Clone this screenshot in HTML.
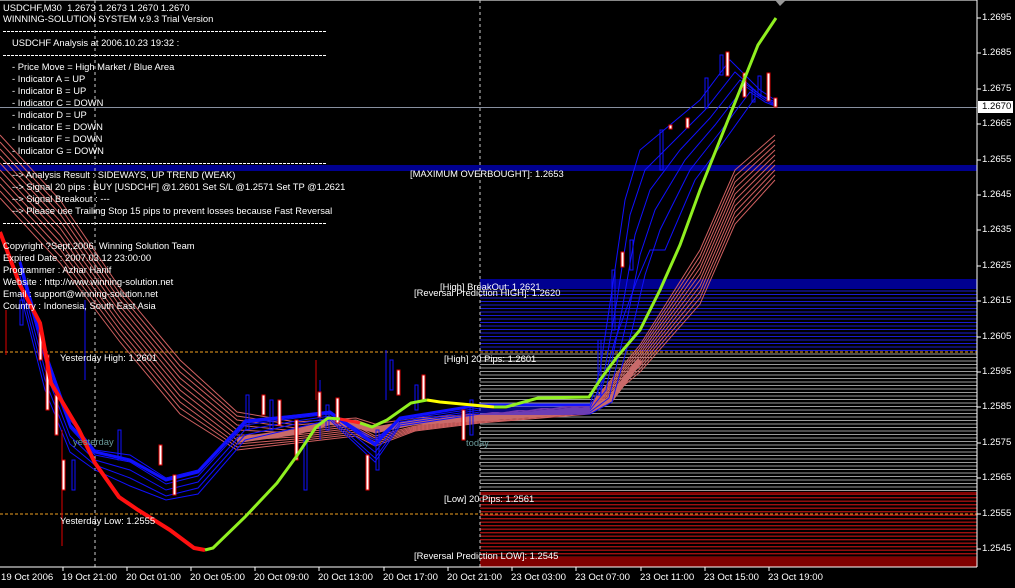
<!DOCTYPE html>
<html><head><meta charset="utf-8"><style>
html,body{margin:0;padding:0;background:#000;}
#w{position:relative;width:1015px;height:588px;overflow:hidden;background:#000;font-family:"Liberation Sans",sans-serif;font-size:9.4px;color:#fff;}
.t{position:absolute;white-space:nowrap;line-height:12px;}
.ax{position:absolute;left:982px;white-space:nowrap;font-size:9.6px;}
.tm{position:absolute;top:572px;white-space:nowrap;font-size:9.6px;}
.d{position:absolute;left:3px;width:324px;height:1px;background:repeating-linear-gradient(90deg,#fff 0 3px,transparent 3px 4px);}
</style></head><body><div id="w">
<svg width="1015" height="588" style="position:absolute;left:0;top:0">
<defs>
<pattern id="pb" width="4" height="3.5" patternUnits="userSpaceOnUse"><rect width="4" height="1" fill="#1a1ad0"/></pattern>
<pattern id="pg" width="4" height="3.5" patternUnits="userSpaceOnUse"><rect width="4" height="1" fill="#9a9a9a"/></pattern>
<pattern id="pr" width="4" height="3.5" patternUnits="userSpaceOnUse"><rect width="4" height="1.4" fill="#a01010"/></pattern>
</defs>
<rect x="0" y="0" width="977" height="1" fill="#888"/>
<rect x="0" y="165" width="977" height="6" fill="#000090"/>
<rect x="480" y="279" width="497" height="10" fill="#000090"/>
<rect x="480" y="289" width="497" height="63" fill="url(#pb)"/>
<rect x="480" y="353" width="497" height="139" fill="url(#pg)"/>
<rect x="480" y="492" width="497" height="65" fill="url(#pr)"/>
<rect x="480" y="492" width="497" height="2" fill="#800000"/>
<rect x="480" y="557" width="497" height="10" fill="#800000"/>
<line x1="0" y1="352" x2="977" y2="352" stroke="#f0a020" stroke-dasharray="3,2"/>
<line x1="0" y1="514" x2="977" y2="514" stroke="#f0a020" stroke-dasharray="3,2"/>
<line x1="95" y1="0" x2="95" y2="567" stroke="#ccc" stroke-dasharray="3,3"/>
<line x1="480" y1="0" x2="480" y2="567" stroke="#ccc" stroke-dasharray="3,3"/>
<line x1="0" y1="107.5" x2="977" y2="107.5" stroke="#8890a0"/>
<g fill="none" stroke="#d06060" stroke-width="1">
<polyline points="0,135 60,200 120,288 180,360 237,412 296,422 356,418 375,424 415,418 480,414 590,405 640,345 700,250 735,170 775,135"/>
<polyline points="0,142 60,207 120,294 180,366 237,416 296,425 356,420 375,427 415,420 480,415 590,406 640,348 700,256 735,176 775,140"/>
<polyline points="0,149 60,214 120,300 180,372 237,420 296,428 356,422 375,430 415,422 480,416 590,407 640,351 700,262 735,182 775,145"/>
<polyline points="0,156 60,221 120,306 180,378 237,425 296,431 356,424 375,433 415,424 480,417 590,408 640,354 700,268 735,188 775,150"/>
<polyline points="0,163 60,228 120,312 180,384 237,430 296,433 356,426 375,436 415,426 480,418 590,409 640,357 700,274 735,194 775,155"/>
<polyline points="0,170 60,235 120,318 180,390 237,435 296,435 356,428 375,438 415,427 480,419 590,410 640,360 700,280 735,200 775,160"/>
<polyline points="0,177 60,242 120,324 180,396 237,440 296,437 356,430 375,440 415,428 480,420 590,411 640,363 700,286 735,206 775,165"/>
<polyline points="0,184 60,249 120,330 180,402 237,444 296,439 356,432 375,442 415,429 480,421 590,412 640,366 700,292 735,212 775,170"/>
<polyline points="0,191 60,256 120,336 180,408 237,447 296,441 356,434 375,444 415,430 480,422 590,413 640,369 700,298 735,218 775,175"/>
<polyline points="0,198 60,263 120,342 180,414 237,450 296,443 356,436 375,446 415,431 480,423 590,414 640,372 700,304 735,224 775,180"/>
</g>
<polyline points="237,440 296,432 330,422 356,425 375,430 415,422 480,418 590,410 610,400 640,360" fill="none" stroke="#c86a6a" stroke-width="6"/>
<g fill="none" stroke="#1010ff" stroke-width="1">
<polyline points="20,260 45,350 70,420 95,450 130,455 166,478 198,470 245,420 296,415 330,412 375,440 400,418 480,405 590,405 600,370 612,290 625,200 640,150 670,125 700,100 730,60 760,90 775,100"/>
<polyline points="20,268 45,360 70,428 95,455 130,462 166,484 198,476 245,425 296,418 330,414 375,446 400,420 480,408 590,408 603,380 617,300 630,215 645,170 675,140 705,110 735,72 760,95 775,102"/>
<polyline points="20,276 45,370 70,436 95,460 130,470 166,490 198,482 245,430 296,421 330,416 375,452 400,422 480,410 590,410 606,390 622,310 635,235 650,190 680,150 710,118 740,80 765,98 775,104"/>
<polyline points="20,284 45,380 70,444 95,465 130,478 166,496 198,488 245,435 296,424 330,418 375,458 400,424 480,412 590,412 609,398 627,320 640,255 655,210 685,160 715,125 745,86 765,100 775,105"/>
<polyline points="20,292 45,390 70,452 95,470 130,486 166,500 198,494 245,440 296,428 330,420 375,462 400,426 480,414 590,414 612,402 632,330 645,275 660,230 690,170 720,132 750,92 765,102 775,106"/>
<polyline points="600,395 615,340 637,280 650,250 665,250 695,180 725,140 755,98"/>
</g>
<polyline points="20,262 45,352 70,425 95,452 130,460 166,480 198,472 245,422 296,416 330,412 375,444 400,418 480,405 590,405" fill="none" stroke="#1010ff" stroke-width="3"/>
<g stroke="#1010ff" fill="none" stroke-width="1">
<rect x="20" y="300" width="3" height="25"/><rect x="72" y="460" width="3" height="30"/><rect x="118" y="430" width="3" height="30"/>
<rect x="246" y="395" width="3" height="35"/><rect x="270" y="400" width="3" height="30"/><rect x="304" y="440" width="3" height="50"/>
<rect x="326" y="405" width="3" height="25"/><rect x="376" y="430" width="3" height="40"/><rect x="390" y="360" width="3" height="30"/>
<rect x="415" y="385" width="3" height="25"/><rect x="470" y="400" width="3" height="35"/><rect x="598" y="340" width="3" height="55"/>
<rect x="612" y="270" width="3" height="60"/><rect x="630" y="240" width="3" height="30"/><rect x="660" y="130" width="3" height="40"/>
<rect x="705" y="78" width="3" height="30"/><rect x="720" y="55" width="3" height="20"/><rect x="752" y="90" width="3" height="12"/><rect x="758" y="76" width="3" height="20"/>
<line x1="85" y1="300" x2="85" y2="380"/><line x1="320" y1="380" x2="320" y2="440"/><line x1="386" y1="350" x2="386" y2="400"/>
</g>
<g stroke="#e00000" stroke-width="1" fill="#fff">
<rect x="39" y="330" width="3" height="30"/><rect x="46" y="355" width="3" height="55"/><rect x="55" y="395" width="3" height="40"/><rect x="62" y="460" width="3" height="30"/>
<rect x="159" y="445" width="3" height="20"/><rect x="173" y="475" width="3" height="20"/>
<rect x="262" y="395" width="3" height="20"/><rect x="278" y="400" width="3" height="25"/><rect x="295" y="420" width="3" height="40"/>
<rect x="318" y="392" width="3" height="25"/><rect x="336" y="398" width="3" height="25"/><rect x="366" y="455" width="3" height="35"/>
<rect x="397" y="370" width="3" height="25"/><rect x="422" y="375" width="3" height="25"/><rect x="462" y="410" width="3" height="30"/>
<rect x="621" y="252" width="3" height="15"/><rect x="669" y="125" width="3" height="4"/><rect x="686" y="118" width="3" height="10"/>
<rect x="726" y="52" width="3" height="24"/><rect x="743" y="73" width="3" height="24"/><rect x="767" y="73" width="3" height="28"/><rect x="774" y="98" width="3" height="9"/>
<line x1="6" y1="310" x2="6" y2="355"/><line x1="62" y1="430" x2="62" y2="546"/><line x1="316" y1="360" x2="316" y2="400"/>
</g>
<polyline points="0,232 20,285 40,323 51,383 79,430 95,463 119,497 138,510 170,530 194,548 205,550" fill="none" stroke="#ff1010" stroke-width="4"/>
<polyline points="205,550 213,548 245,517 277,483 296,457 316,427 328,418 340,419" fill="none" stroke="#90f020" stroke-width="3"/>
<polyline points="340,419 360,423" fill="none" stroke="#ff2020" stroke-width="3"/>
<polyline points="360,423 372,427 387,420 411,403 427,400" fill="none" stroke="#90f020" stroke-width="3"/>
<polyline points="427,400 440,402 494,407" fill="none" stroke="#ffff00" stroke-width="3"/>
<polyline points="494,407 506,407 538,398 589,397 600,380 617,357 640,330 660,290 680,245 700,190 720,140 740,90 758,45 776,18" fill="none" stroke="#90f020" stroke-width="3"/>
<polygon points="775,0 786,0 780,6" fill="#999"/>
<line x1="977" y1="0" x2="977" y2="567" stroke="#fff"/>
<line x1="0" y1="567" x2="977" y2="567" stroke="#fff"/>
<g stroke="#fff">
<line x1="977" y1="18" x2="981" y2="18"/><line x1="977" y1="53" x2="981" y2="53"/><line x1="977" y1="89" x2="981" y2="89"/><line x1="977" y1="124" x2="981" y2="124"/><line x1="977" y1="160" x2="981" y2="160"/><line x1="977" y1="195" x2="981" y2="195"/><line x1="977" y1="230" x2="981" y2="230"/><line x1="977" y1="266" x2="981" y2="266"/><line x1="977" y1="301" x2="981" y2="301"/><line x1="977" y1="337" x2="981" y2="337"/><line x1="977" y1="372" x2="981" y2="372"/><line x1="977" y1="407" x2="981" y2="407"/><line x1="977" y1="443" x2="981" y2="443"/><line x1="977" y1="478" x2="981" y2="478"/><line x1="977" y1="514" x2="981" y2="514"/><line x1="977" y1="549" x2="981" y2="549"/>
<line x1="63" y1="567" x2="63" y2="571"/><line x1="127" y1="567" x2="127" y2="571"/><line x1="191" y1="567" x2="191" y2="571"/><line x1="255" y1="567" x2="255" y2="571"/><line x1="319" y1="567" x2="319" y2="571"/><line x1="384" y1="567" x2="384" y2="571"/><line x1="448" y1="567" x2="448" y2="571"/><line x1="512" y1="567" x2="512" y2="571"/><line x1="576" y1="567" x2="576" y2="571"/><line x1="641" y1="567" x2="641" y2="571"/><line x1="705" y1="567" x2="705" y2="571"/><line x1="769" y1="567" x2="769" y2="571"/>
</g>
<rect x="978" y="101" width="35" height="12" fill="#fff"/>
</svg>
<div class="ax" style="top:12px">1.2695</div><div class="ax" style="top:47px">1.2685</div><div class="ax" style="top:83px">1.2675</div>
<div class="ax" style="top:101px;color:#000">1.2670</div>
<div class="ax" style="top:118px">1.2665</div><div class="ax" style="top:154px">1.2655</div><div class="ax" style="top:189px">1.2645</div><div class="ax" style="top:224px">1.2635</div><div class="ax" style="top:260px">1.2625</div><div class="ax" style="top:295px">1.2615</div><div class="ax" style="top:331px">1.2605</div><div class="ax" style="top:366px">1.2595</div><div class="ax" style="top:401px">1.2585</div><div class="ax" style="top:437px">1.2575</div><div class="ax" style="top:472px">1.2565</div><div class="ax" style="top:508px">1.2555</div><div class="ax" style="top:543px">1.2545</div>
<div class="tm" style="left:1px">19 Oct 2006</div><div class="tm" style="left:62px">19 Oct 21:00</div><div class="tm" style="left:126px">20 Oct 01:00</div><div class="tm" style="left:190px">20 Oct 05:00</div><div class="tm" style="left:254px">20 Oct 09:00</div><div class="tm" style="left:318px">20 Oct 13:00</div><div class="tm" style="left:383px">20 Oct 17:00</div><div class="tm" style="left:447px">20 Oct 21:00</div><div class="tm" style="left:511px">23 Oct 03:00</div><div class="tm" style="left:575px">23 Oct 07:00</div><div class="tm" style="left:640px">23 Oct 11:00</div><div class="tm" style="left:704px">23 Oct 15:00</div><div class="tm" style="left:768px">23 Oct 19:00</div>
<div class="t" style="left:3px;top:2px">USDCHF,M30&nbsp; 1.2673 1.2673 1.2670 1.2670</div>
<div class="t" style="left:3px;top:13px">WINNING-SOLUTION SYSTEM v.9.3 Trial Version</div>
<div class="d" style="top:31px"></div>
<div class="t" style="left:12px;top:37px">USDCHF Analysis at 2006.10.23 19:32 :</div>
<div class="d" style="top:55px"></div>
<div class="t" style="left:12px;top:61px">- Price Move = High Market / Blue Area<br>- Indicator A = UP<br>- Indicator B = UP<br>- Indicator C = DOWN<br>- Indicator D = UP<br>- Indicator E = DOWN<br>- Indicator F = DOWN<br>- Indicator G = DOWN</div>
<div class="d" style="top:163px"></div>
<div class="t" style="left:12px;top:169px">--&gt; Analysis Result : SIDEWAYS, UP TREND (WEAK)<br>--&gt; Signal 20 pips : BUY [USDCHF] @1.2601 Set S/L @1.2571 Set TP @1.2621<br>--&gt; Signal Breakout : ---<br>--&gt; Please use Trailing Stop 15 pips to prevent losses because Fast Reversal</div>
<div class="d" style="top:223px"></div>
<div class="t" style="left:3px;top:240px">Copyright ?Sept,2006, Winning Solution Team<br>Expired Date : 2007.03.12 23:00:00<br>Programmer : Azhar Hanif<br>Website : http://www.winning-solution.net<br>Email : support@winning-solution.net<br>Country : Indonesia, South East Asia</div>
<div class="t" style="left:410px;top:168px">[MAXIMUM OVERBOUGHT]: 1.2653</div>
<div class="t" style="left:440px;top:281px">[High] BreakOut: 1.2621</div>
<div class="t" style="left:414px;top:287px">[Reversal Prediction HIGH]: 1.2620</div>
<div class="t" style="left:444px;top:353px">[High] 20 Pips: 1.2601</div>
<div class="t" style="left:60px;top:352px">Yesterday High: 1.2601</div>
<div class="t" style="left:444px;top:493px">[Low] 20 Pips: 1.2561</div>
<div class="t" style="left:60px;top:515px">Yesterday Low: 1.2555</div>
<div class="t" style="left:414px;top:550px">[Reversal Prediction LOW]: 1.2545</div>
<div class="t" style="left:73px;top:436px;color:#6a9a9a">yesterday</div>
<div class="t" style="left:466px;top:437px;color:#6a9a9a">today</div>
</div></body></html>
